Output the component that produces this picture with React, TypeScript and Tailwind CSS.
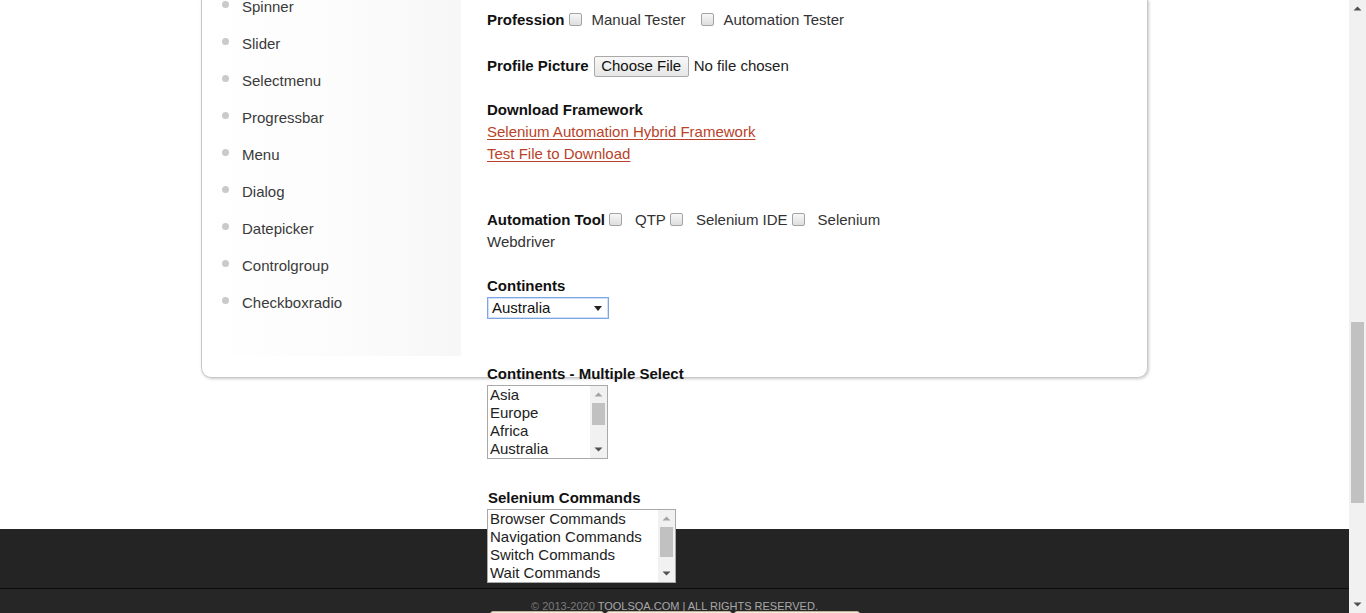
const menuItems = [
  'Spinner',
  'Slider',
  'Selectmenu',
  'Progressbar',
  'Menu',
  'Dialog',
  'Datepicker',
  'Controlgroup',
  'Checkboxradio',
];

function Check() {
  return (
    <span className="mb-[2px] inline-block h-[13px] w-[13px] shrink-0 rounded-[2px] border border-[#a3a3a3] bg-linear-to-b from-[#f7f7f7] to-[#dedede]" />
  );
}

function UpArrow({ color }: { color: string }) {
  return (
    <svg width="17" height="17" viewBox="0 0 17 17" className="shrink-0">
      <path d="M4.5 10.5 L8.5 6.5 L12.5 10.5 Z" fill={color} />
    </svg>
  );
}

function DownArrow({ color }: { color: string }) {
  return (
    <svg width="17" height="17" viewBox="0 0 17 17" className="shrink-0">
      <path d="M4.5 6.5 L8.5 10.5 L12.5 6.5 Z" fill={color} />
    </svg>
  );
}

interface ListBoxProps {
  items: string[];
  width: string;
  thumbH: string;
}

function ListBox({ items, width, thumbH }: ListBoxProps) {
  return (
    <div className={`flex h-[74px] ${width} border border-[#a9a9a9] bg-white`}>
      <ul className="flex-1 pl-[2px] text-[15px] leading-[18px] text-[#222]">
        {items.map((i) => (
          <li key={i} className="whitespace-nowrap">
            {i}
          </li>
        ))}
      </ul>
      <div className="flex w-[17px] flex-col bg-[#f1f1f1]">
        <UpArrow color="#a3a3a3" />
        <div className={`mx-[2px] ${thumbH} bg-[#c1c1c1]`} />
        <div className="flex-1" />
        <DownArrow color="#505050" />
      </div>
    </div>
  );
}

export default function App() {
  return (
    <div className="flex h-[613px] w-[1366px] overflow-hidden bg-white font-['Liberation_Sans',Arial,sans-serif]">
      <div className="flex w-[1349px] shrink-0 flex-col">
        {/* page body */}
        <div className="h-[529px] shrink-0">
          <div className="ml-[201px] flex h-[378px] w-[947px] rounded-b-[10px] border-x border-b border-[#c9c9c9] shadow-[1px_1px_3px_rgba(0,0,0,0.22)]">
            <aside className="h-[356px] w-[259px] shrink-0 bg-linear-to-r from-white via-[#fcfcfc] to-[#f7f7f7]">
              <ul className="-mt-[11px] text-[15px] text-[#3a3a3a]">
                {menuItems.map((m) => (
                  <li key={m} className="flex h-[37px] items-center">
                    <span className="mb-[6px] ml-[20px] h-[7px] w-[7px] rounded-full bg-[#cacaca]" />
                    <span className="ml-[13px]">{m}</span>
                  </li>
                ))}
              </ul>
            </aside>

            <div className="relative z-10 flex flex-col pl-[26px] text-[15px] leading-[22px] text-[#333]">
              <div className="mt-[9px] flex h-[22px] items-center whitespace-nowrap">
                <b className="text-[#111]">Profession</b>
                <span className="ml-[4px] flex"><Check /></span>
                <span className="ml-[10px]">Manual Tester</span>
                <span className="ml-[16px] flex"><Check /></span>
                <span className="ml-[9px]">Automation Tester</span>
              </div>

              <div className="mt-[24px] flex h-[22px] items-center whitespace-nowrap">
                <b className="text-[#111]">Profile Picture</b>
                <span className="ml-[5px] flex h-[21px] w-[95px] items-center justify-center rounded-[2px] border border-[#a9a9a9] bg-linear-to-b from-[#f8f8f8] to-[#e6e6e6] text-[#111]">
                  Choose File
                </span>
                <span className="ml-[5px] text-[#222]">No file chosen</span>
              </div>

              <b className="mt-[22px] text-[#111]">Download Framework</b>
              <a className="text-[#b9432a] underline underline-offset-[2px]">Selenium Automation Hybrid Framework</a>
              <a className="text-[#b9432a] underline underline-offset-[2px]">Test File to Download</a>

              <div className="mt-[44px] flex h-[22px] items-center whitespace-nowrap">
                <b className="text-[#111]">Automation Tool</b>
                <span className="ml-[4px] flex"><Check /></span>
                <span className="ml-[13px]">QTP</span>
                <span className="ml-[4px] flex"><Check /></span>
                <span className="ml-[13px]">Selenium IDE</span>
                <span className="ml-[4px] flex"><Check /></span>
                <span className="ml-[13px]">Selenium</span>
              </div>
              <span>Webdriver</span>

              <b className="mt-[22px] text-[#111]">Continents</b>
              <div className="flex h-[22px] w-[122px] items-center justify-between border border-[#7aa6e6] pl-[4px] pr-[6px] text-[#111] shadow-[inset_0_0_0_1px_#cfe0f7]">
                <span>Australia</span>
                <svg width="8" height="5" viewBox="0 0 8 5">
                  <path d="M0 0 L8 0 L4 5 Z" fill="#222" />
                </svg>
              </div>

              <b className="mt-[44px] whitespace-nowrap text-[#111]">Continents - Multiple Select</b>
              <ListBox items={['Asia', 'Europe', 'Africa', 'Australia']} width="w-[121px]" thumbH="h-[22px]" />

              <b className="ml-[1px] mt-[28px] text-[#111]">Selenium Commands</b>
              <ListBox
                items={['Browser Commands', 'Navigation Commands', 'Switch Commands', 'Wait Commands']}
                width="w-[189px]"
                thumbH="h-[30px]"
              />
            </div>
          </div>
        </div>

        {/* footer */}
        <footer className="flex flex-1 flex-col bg-[#242424]">
          <div className="h-[59px] shrink-0" />
          <div className="h-px shrink-0 bg-[#0b0b0b]" />
          <div className="flex flex-1 flex-col items-center bg-[#262626]">
            <p className="mt-[12px] h-[11px] whitespace-nowrap text-[11px] leading-[11px] text-[#7a7a7a]">
              © 2013-2020 <span className="text-[#a8a8a8]">TOOLSQA.COM | ALL RIGHTS RESERVED.</span>
            </p>
            <div className="-mt-[1px] flex gap-[2px]">
              <span className="h-[10px] w-[114px] rounded-t-[3px] border border-[#bdb39f] bg-[#f4ead8]" />
              <span className="h-[10px] w-[126px] rounded-t-[3px] border border-[#bdb39f] bg-[#f4ead8]" />
              <span className="h-[10px] w-[126px] rounded-t-[3px] border border-[#bdb39f] bg-[#f4ead8]" />
            </div>
          </div>
        </footer>
      </div>

      {/* page scrollbar */}
      <div className="flex w-[17px] shrink-0 flex-col bg-[#f1f1f1]">
        <UpArrow color="#505050" />
        <div className="h-[305px]" />
        <div className="mx-[2px] h-[181px] bg-[#c1c1c1]" />
        <div className="flex-1" />
        <DownArrow color="#505050" />
      </div>
    </div>
  );
}
